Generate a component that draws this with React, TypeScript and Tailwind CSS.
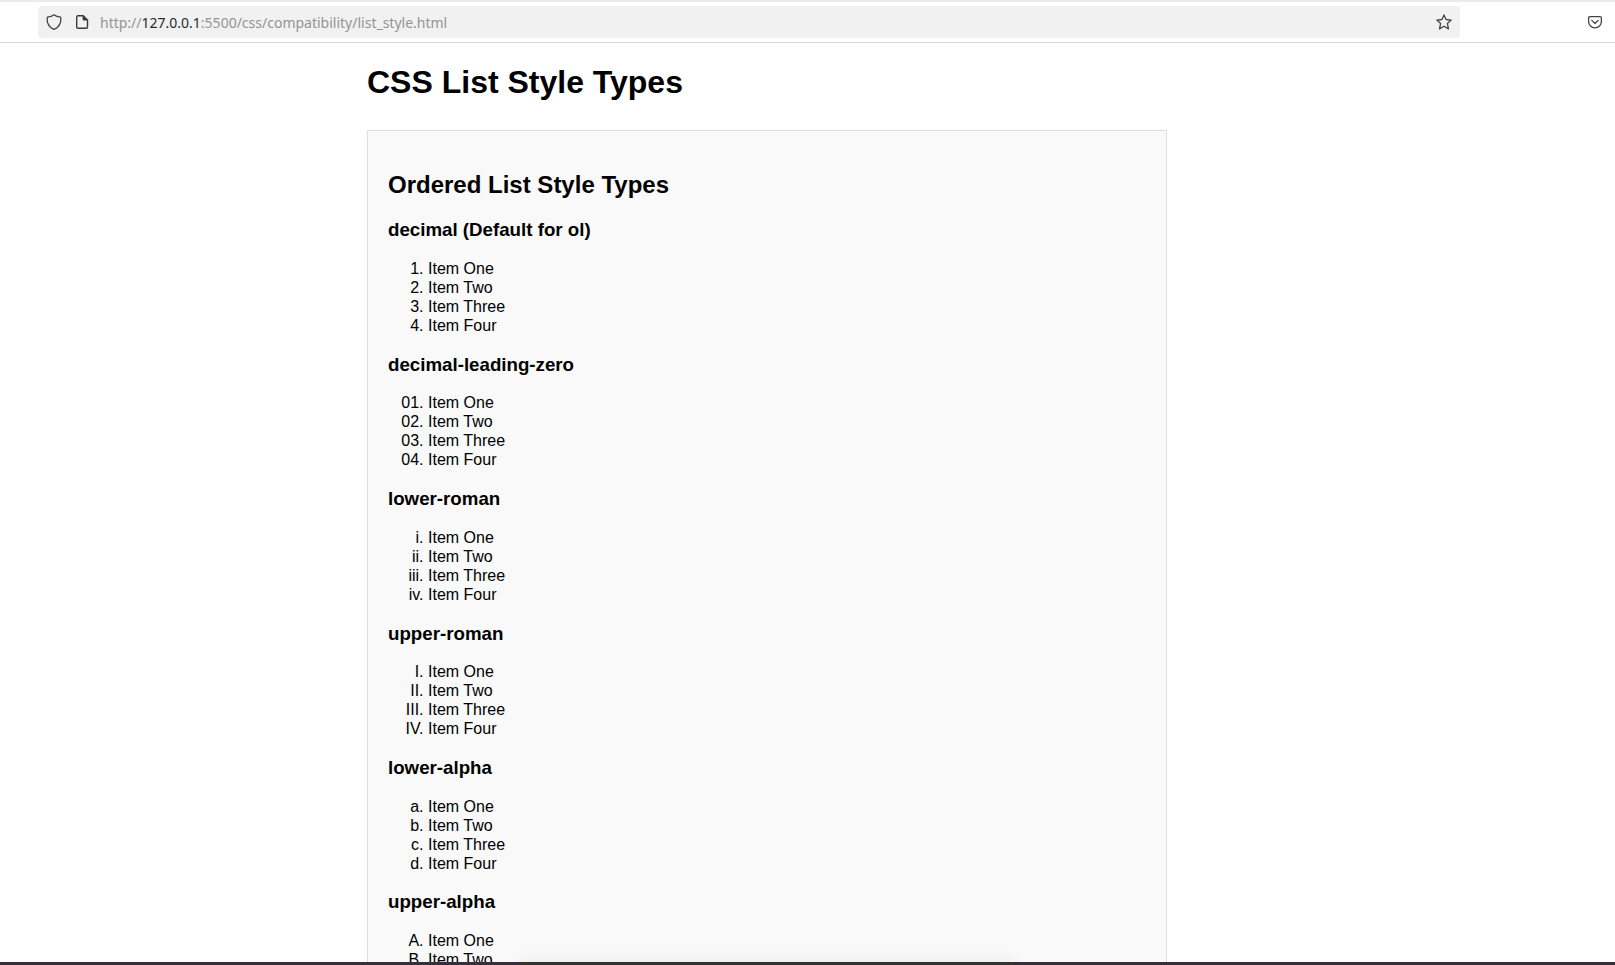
import React from "react";

const sections = [
  { title: "decimal (Default for ol)", style: "list-decimal" },
  { title: "decimal-leading-zero", style: "list-[decimal-leading-zero]" },
  { title: "lower-roman", style: "list-[lower-roman]" },
  { title: "upper-roman", style: "list-[upper-roman]" },
  { title: "lower-alpha", style: "list-[lower-alpha]" },
  { title: "upper-alpha", style: "list-[upper-alpha]" },
];

const items = ["Item One", "Item Two", "Item Three", "Item Four"];

function ShieldIcon() {
  return (
    <svg className="h-4 w-4" viewBox="0 0 16 16" fill="none" stroke="#444" strokeWidth="1.3" strokeLinejoin="round">
      <path d="M8 .8 C6.2 2.3 3.8 3 1.4 3.2 C1 5.5 1.1 7.6 2 9.7 C3.200 12.400 5.400 14.400 8 15.300 C10.600 14.400 12.800 12.400 14 9.700 C14.900 7.600 15 5.500 14.600 3.200 C12.200 3 9.800 2.300 8 .8 Z" />
    </svg>
  );
}

function PageIcon() {
  return (
    <svg className="h-4 w-4" viewBox="0 0 16 16" fill="none" stroke="#3a3a3a" strokeWidth="1.4" strokeLinejoin="round">
      <path d="M9.500 1.700 H4 Q2.700 1.700 2.700 3 V13 Q2.700 14.300 4 14.300 H12.200 Q13.500 14.300 13.500 13 V6" />
      <path d="M8.600 1 H9.400 L14.200 5.800 V6.600 H9.700 Q8.600 6.600 8.600 5.500 Z" fill="#3a3a3a" stroke="none" />
    </svg>
  );
}

function StarIcon() {
  return (
    <svg className="h-4 w-4" viewBox="0 0 16 16" fill="none" stroke="#444" strokeWidth="1.3" strokeLinejoin="round">
      <path d="M8 .9 L10.100 5.500 L15.200 6.100 L11.400 9.600 L12.500 14.900 L8 12.300 L3.500 14.900 L4.600 9.600 L.8 6.100 L5.900 5.500 Z" />
    </svg>
  );
}

function PocketIcon() {
  return (
    <svg className="h-4 w-4" viewBox="0 0 16 16" fill="none" stroke="#444" strokeWidth="1.3" strokeLinejoin="round" strokeLinecap="round">
      <path d="M3 2.600 H13 Q14.400 2.600 14.400 4 V7.500 A6.400 6.400 0 0 1 1.600 7.500 V4 Q1.600 2.600 3 2.600 Z" />
      <path d="M4.800 6.400 L8 9.500 L11.200 6.400" />
    </svg>
  );
}

export default function App() {
  return (
    <div className="flex h-[965px] w-[1615px] flex-col overflow-hidden bg-white text-black">
      <header className="flex h-[43px] shrink-0 border-t-2 border-b border-t-[#ebebeb] border-b-[#dadada] pt-1 pr-3 pl-[38px]">
        <div className="flex h-8 w-[1422px] items-center rounded bg-[#f1f1f1] pr-2 pl-2">
          <ShieldIcon />
          <div className="ml-3">
            <PageIcon />
          </div>
          <p className="ml-[10px] grow pt-0.5 font-['Noto_Sans',sans-serif] text-[14px] leading-5 whitespace-nowrap text-[#949494]">
            http://<span className="text-[#2b2b2b]">127.0.0.1</span>:5500/css/compatibility/list_style.html
          </p>
          <StarIcon />
        </div>
        <div className="ml-auto flex h-8 items-center">
          <PocketIcon />
        </div>
      </header>
      <main className="ml-[367px] flex h-[919px] w-[800px] flex-col overflow-hidden pt-[21px] font-['Liberation_Sans',sans-serif]">
        <h1 className="text-[32px] leading-[37px] font-bold">CSS List Style Types</h1>
        <section className="mt-[29px] h-[1400px] shrink-0 border border-[#ddd] bg-[#f9f9f9] px-5 pt-[39.920px]">
          <h2 className="mb-[21.320px] text-2xl leading-[27px] font-bold">Ordered List Style Types</h2>
          {sections.map((s) => (
            <React.Fragment key={s.title}>
              <h3 className="my-[18.720px] text-[18.720px] leading-[21px] font-bold first-of-type:mt-0">{s.title}</h3>
              <ol className={`my-4 pl-10 text-base leading-[19px] ${s.style}`}>
                {items.map((item) => (
                  <li key={item}>{item}</li>
                ))}
              </ol>
            </React.Fragment>
          ))}
        </section>
      </main>
      <footer className="flex h-[3px] shrink-0 bg-[#332f3d]">
        <div className="w-[519px]" />
        <div className="w-[494px] bg-[#333] shadow-[0_0_14px_rgba(0,0,0,0.18)]" />
      </footer>
    </div>
  );
}
